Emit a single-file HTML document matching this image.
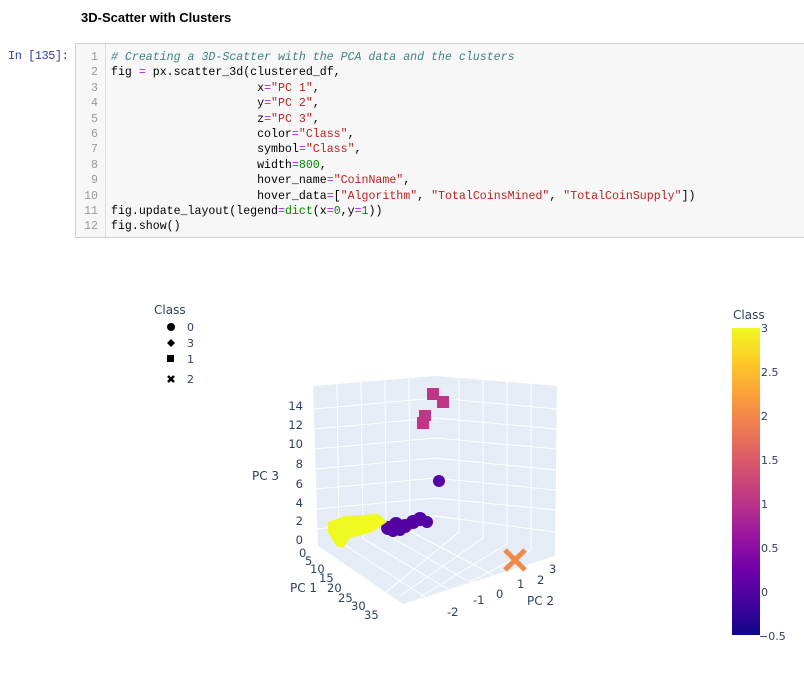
<!DOCTYPE html>
<html><head><meta charset="utf-8"><style>
body{margin:0;width:804px;height:696px;background:#fff;position:relative;overflow:hidden;font-family:"Liberation Sans",sans-serif}
.h{position:absolute;left:81px;top:10px;font-weight:bold;font-size:13px;color:#000}
.prompt{position:absolute;left:8px;top:49px;font-family:"Liberation Mono",monospace;font-size:12px;letter-spacing:-0.5px;color:#303f9f}
.cell{position:absolute;left:75px;top:43px;width:735px;height:195px;background:#f7f7f7;border:1px solid #cfcfcf;box-sizing:border-box}
.gut{position:absolute;left:0;top:0;width:29px;height:100%;border-right:1px solid #ddd;background:#f7f7f7}
pre{margin:0;position:absolute;top:6px;font-family:"Liberation Mono",monospace;font-size:11.6px;line-height:15.4px}
.ln{left:0;width:22px;text-align:right;color:#999}
.code{left:35px;color:#000}
.c{color:#408080;font-style:italic}.s{color:#ba2121}.o{color:#aa22ff}.n{color:#080}
</style></head><body>
<div class="h">3D-Scatter with Clusters</div>
<div class="prompt">In [135]:</div>
<div class="cell"><div class="gut"></div>
<pre class="ln">1
2
3
4
5
6
7
8
9
10
11
12</pre>
<pre class="code"><span class="c"># Creating a 3D-Scatter with the PCA data and the clusters</span>
fig <span class="o">=</span> px.scatter_3d(clustered_df,
                     x<span class="o">=</span><span class="s">"PC 1"</span>,
                     y<span class="o">=</span><span class="s">"PC 2"</span>,
                     z<span class="o">=</span><span class="s">"PC 3"</span>,
                     color<span class="o">=</span><span class="s">"Class"</span>,
                     symbol<span class="o">=</span><span class="s">"Class"</span>,
                     width<span class="o">=</span><span class="n">800</span>,
                     hover_name<span class="o">=</span><span class="s">"CoinName"</span>,
                     hover_data<span class="o">=</span>[<span class="s">"Algorithm"</span>, <span class="s">"TotalCoinsMined"</span>, <span class="s">"TotalCoinSupply"</span>])
fig.update_layout(legend<span class="o">=</span><span class="n">dict</span>(x<span class="o">=</span><span class="n">0</span>,y<span class="o">=</span><span class="n">1</span>))
fig.show()</pre>
</div>
<svg width="804" height="696" style="position:absolute;left:0;top:0" font-family="DejaVu Sans,sans-serif" fill="#2a3f5f">
<defs><linearGradient id="g" x1="0" y1="1" x2="0" y2="0">
<stop offset="0" stop-color="#0d0887"/><stop offset="0.11" stop-color="#46039f"/><stop offset="0.22" stop-color="#7201a8"/><stop offset="0.33" stop-color="#9c179e"/><stop offset="0.44" stop-color="#bd3786"/><stop offset="0.56" stop-color="#d8576b"/><stop offset="0.67" stop-color="#ed7953"/><stop offset="0.78" stop-color="#fb9f3a"/><stop offset="0.89" stop-color="#fdca26"/><stop offset="1" stop-color="#f0f921"/></linearGradient></defs>
<polygon points="313,386 435,376 435,526 318,546" fill="#e5ecf6"/>
<polygon points="435,376 557,386 555,556 435,526" fill="#e5ecf6"/>
<polygon points="318,546 435,526 555,556 403,604" fill="#e5ecf6"/>
<g stroke="#fff" stroke-width="1" fill="none">
<path d="M314,409 L435,398 L557,409 M314,429 L435,418 L557,429 M315,449 L435,438 L556,449 M315,469 L435,458 L556,470 M316,489 L435,478 L556,490 M316,509 L435,498 L556,510 M317,529 L435,516 L555,532"/>
<path d="M337,384 L339,542 M361,382 L363,538 M385,380 L386,534 M409,378 L410,530 M459,378 L459,532 M483,380 L483,538 M507,382 L507,544 M531,384 L531,550"/>
<path d="M340,542 L425,597 M362,538 L448,589 M385,534 L470,582 M408,530 L493,575 M459,532 L380,597 M483,538 L400,596 M507,544 L420,597 M531,550 L470,582"/>
</g>
<circle cx="439" cy="481" r="6" fill="#5402a3"/>
<g fill="#5402a3"><circle cx="388" cy="528" r="7"/><circle cx="396" cy="524" r="7"/><circle cx="405" cy="526" r="7"/><circle cx="413" cy="522" r="7"/><circle cx="420" cy="519" r="7"/><circle cx="427" cy="522" r="6"/><circle cx="400" cy="530" r="6"/><circle cx="393" cy="531" r="6"/></g>
<g fill="#f0f921"><polygon points="328,522 345,516 360,515 378,514 387,522 372,532 362,535 350,538 343,548 336,546 328,532"/><circle cx="336" cy="530" r="8"/><circle cx="350" cy="526" r="8"/><circle cx="364" cy="524" r="7"/><circle cx="376" cy="521" r="7"/><circle cx="342" cy="539" r="6"/></g>
<g fill="#bd3786"><rect x="427" y="388" width="12" height="12"/><rect x="437" y="396" width="12" height="12"/><rect x="419" y="410" width="12" height="11"/><rect x="417" y="417" width="12" height="12"/></g>
<path d="M505,550 L525,570 M525,550 L505,570" stroke="#ef8a48" stroke-width="5"/>
<g font-size="11.5" text-anchor="end"><text x="303" y="410">14</text><text x="303" y="429">12</text><text x="303" y="448">10</text><text x="303" y="468">8</text><text x="303" y="488">6</text><text x="303" y="507">4</text><text x="303" y="525">2</text><text x="303" y="544">0</text></g>
<text x="252" y="480" font-size="12">PC 3</text>
<g font-size="11.5"><text x="299" y="557">0</text><text x="305" y="565">5</text><text x="310" y="573">10</text><text x="319" y="582">15</text><text x="327" y="592">20</text><text x="338" y="602">25</text><text x="351" y="610">30</text><text x="364" y="619">35</text>
<text x="549" y="573">3</text><text x="537" y="584">2</text><text x="517" y="588">1</text><text x="496" y="598">0</text><text x="473" y="604">-1</text><text x="447" y="616">-2</text></g>
<text x="290" y="592" font-size="12">PC 1</text><text x="527" y="605" font-size="12">PC 2</text>
<text x="154" y="314" font-size="12">Class</text>
<circle cx="171" cy="327" r="4" fill="#000"/><text x="187" y="331" font-size="11">0</text>
<polygon points="171,339 175,343 171,347 167,343" fill="#000"/><text x="187" y="347" font-size="11">3</text>
<rect x="167" y="355" width="7" height="7" fill="#000"/><text x="187" y="363" font-size="11">1</text>
<path d="M168,376 L174,382 M174,376 L168,382" stroke="#000" stroke-width="2.5"/><text x="187" y="383" font-size="11">2</text>
<text x="733" y="319" font-size="12">Class</text>
<rect x="732" y="328" width="28" height="307" fill="url(#g)"/>
<g font-size="11"><text x="761" y="332">3</text><text x="761" y="376">2.5</text><text x="761" y="420">2</text><text x="761" y="464">1.5</text><text x="761" y="508">1</text><text x="761" y="552">0.5</text><text x="761" y="596">0</text><text x="759" y="640">−0.5</text></g>
</svg>
</body></html>
